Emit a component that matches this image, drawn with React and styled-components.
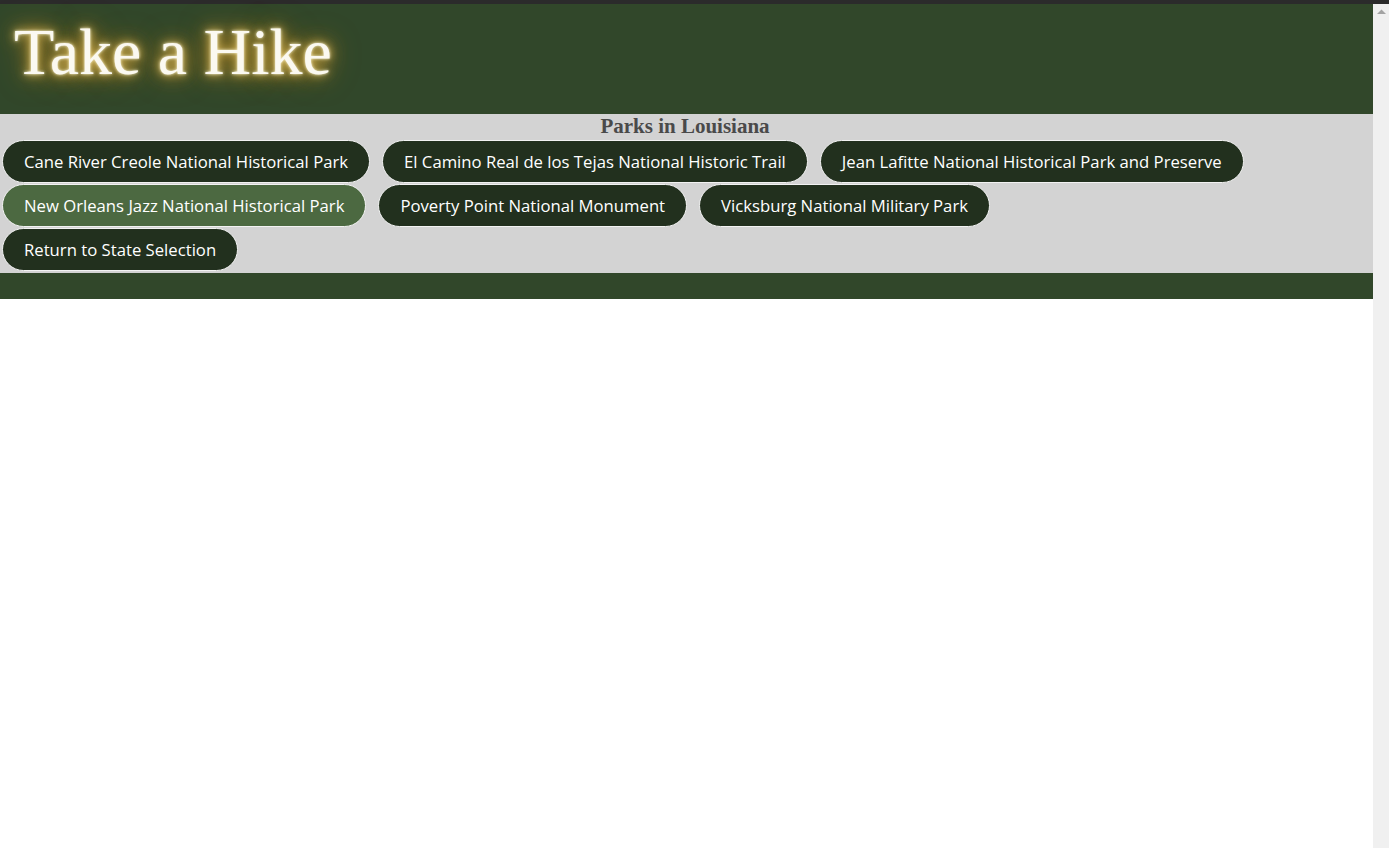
import React from "react";
import styled, { createGlobalStyle } from "styled-components";

const GlobalStyle = createGlobalStyle`
  html, body {
    margin: 0;
    padding: 0;
    background: #ffffff;
    overflow: hidden;
  }
`;

const parks = [
  "Cane River Creole National Historical Park",
  "El Camino Real de los Tejas National Historic Trail",
  "Jean Lafitte National Historical Park and Preserve",
  "New Orleans Jazz National Historical Park",
  "Poverty Point National Monument",
  "Vicksburg National Military Park",
];

const App = () => {
  return (
    <>
      <GlobalStyle />
      <TopStrip />
      <Frame>
        <Page>
          <Header>
            <Title>Take a Hike</Title>
          </Header>
          <ParkSection>
            <SectionTitle>Parks in Louisiana</SectionTitle>
            <ButtonList>
              {parks.map((park) => (
                <ParkButton key={park} $active={park.startsWith("New Orleans")}>
                  {park}
                </ParkButton>
              ))}
            </ButtonList>
            <ButtonList>
              <ParkButton>Return to State Selection</ParkButton>
            </ButtonList>
          </ParkSection>
          <Footer />
        </Page>
        <Scrollbar>
          <svg width="9" height="6" viewBox="0 0 9 6">
            <path d="M0 5 L4.5 0.5 L9 5 Z" fill="#a3a3a3" />
          </svg>
        </Scrollbar>
      </Frame>
    </>
  );
};

export default App;

const TopStrip = styled.div`
  height: 4px;
  background: #2b2b2b;
`;

const Frame = styled.div`
  display: flex;
  height: 844px;
`;

const Page = styled.div`
  flex: 1;
  display: flex;
  flex-direction: column;
`;

const Header = styled.header`
  height: 110px;
  background: #31472a;
  display: flex;
  align-items: center;
  padding-left: 14px;
`;

const Title = styled.h1`
  margin: 0 0 14px;
  font-family: "Liberation Serif", "DejaVu Serif", serif;
  font-weight: normal;
  font-size: 66px;
  color: #fbf9f1;
  text-shadow: 0 0 3px #fffbe0, 0 0 9px #f0d070, 0 0 18px #d49a25,
    0 0 30px #a87318;
`;

const ParkSection = styled.section`
  background: #d3d3d3;
  padding: 2px 0 2px 2px;
  display: flex;
  flex-direction: column;
  row-gap: 1px;
`;

const SectionTitle = styled.h2`
  margin: 0 0 2px -5px;
  text-align: center;
  font-family: "Liberation Serif", "DejaVu Serif", serif;
  font-size: 21px;
  font-weight: bold;
  color: #4a4a4a;
  line-height: 21px;
`;

const ButtonList = styled.div`
  display: flex;
  flex-wrap: wrap;
  column-gap: 12px;
  row-gap: 1px;
`;

const ParkButton = styled.button`
  height: 43px;
  padding: 0 21px;
  border: 1px solid #f2f2f2;
  border-radius: 22px;
  background: ${({ $active }) => ($active ? "#4c6941" : "#22301e")};
  color: #ffffff;
  font-family: "Open Sans", "Noto Sans", sans-serif;
  font-size: 16.7px;
  cursor: pointer;
`;

const Footer = styled.footer`
  height: 26px;
  background: #31472a;
`;

const Scrollbar = styled.div`
  width: 16px;
  background: #f0f0f0;
  display: flex;
  justify-content: center;
  padding-top: 5px;
  box-sizing: border-box;
`;
